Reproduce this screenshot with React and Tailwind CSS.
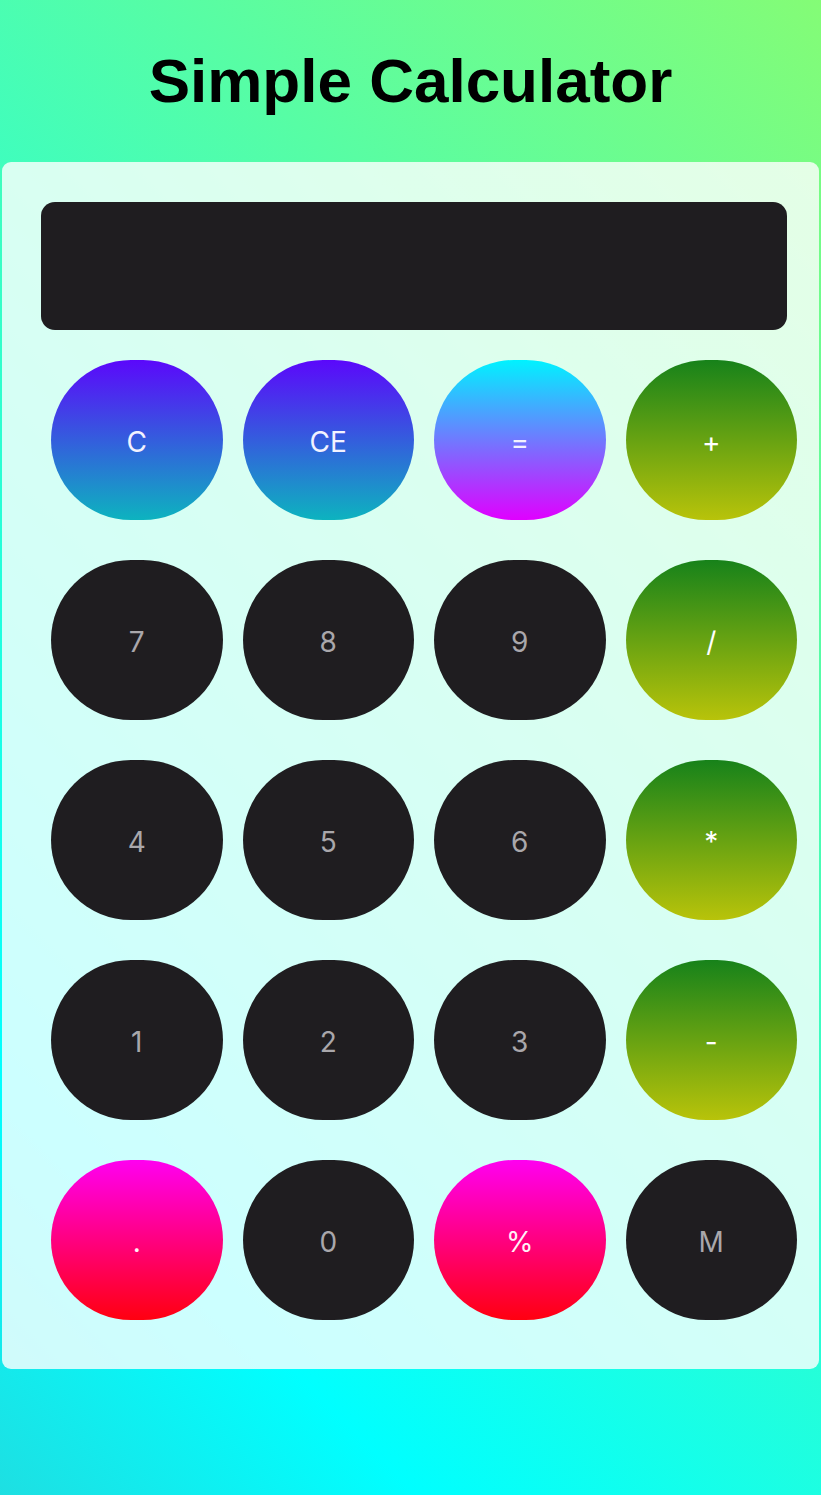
import React from "react";

const keys = [
  { label: "C", kind: "clear" },
  { label: "CE", kind: "clear" },
  { label: "=", kind: "equals" },
  { label: "+", kind: "op" },
  { label: "7", kind: "num" },
  { label: "8", kind: "num" },
  { label: "9", kind: "num" },
  { label: "/", kind: "op" },
  { label: "4", kind: "num" },
  { label: "5", kind: "num" },
  { label: "6", kind: "num" },
  { label: "*", kind: "op" },
  { label: "1", kind: "num" },
  { label: "2", kind: "num" },
  { label: "3", kind: "num" },
  { label: "-", kind: "op" },
  { label: ".", kind: "pink" },
  { label: "0", kind: "num" },
  { label: "%", kind: "pink" },
  { label: "M", kind: "num" },
];

const styles = {
  clear: "bg-[linear-gradient(to_bottom,#5b08fb,#0db3bf)] text-[#f2f2ff]",
  equals: "bg-[linear-gradient(to_bottom,#00f2ff,#e000ff)] text-[#f2f2ff]",
  op: "bg-[linear-gradient(to_bottom,#17821a,#b8c30a)] text-white",
  pink: "bg-[linear-gradient(to_bottom,#ff00f0,#ff0010)] text-[#fff0f8]",
  num: "bg-[#1f1d20] text-[#a9a7ab]",
};

export default function App() {
  return (
    <div className="min-h-[1495px] w-full bg-[linear-gradient(45deg,#1edfe2_0%,#00ffff_18%,#84fc76_100%)] font-['Inter','Liberation_Sans',sans-serif]">
      <h1 className="pt-[50px] pb-[50px] text-center text-[62px] leading-[62px] font-bold text-black font-['Liberation_Sans',Arial,sans-serif]">
        Simple Calculator
      </h1>
      <div className="mx-[2px] rounded-[9px] bg-white/80 pl-[39px] pr-[21px] pt-[40px] pb-[49px]">
        <div className="h-[128px] w-[746px] rounded-[14px] bg-[#1f1d20]"></div>
        <div className="mt-[30px] ml-[10px] grid w-[746px] grid-cols-4 gap-x-[20px] gap-y-[40px]">
          {keys.map((k) => (
            <button
              key={k.label}
              className={`flex h-[160px] items-center justify-center rounded-full text-[28px] font-normal ${styles[k.kind]}`}
            >
              <span className="translate-y-[2px]">{k.label}</span>
            </button>
          ))}
        </div>
      </div>
    </div>
  );
}
